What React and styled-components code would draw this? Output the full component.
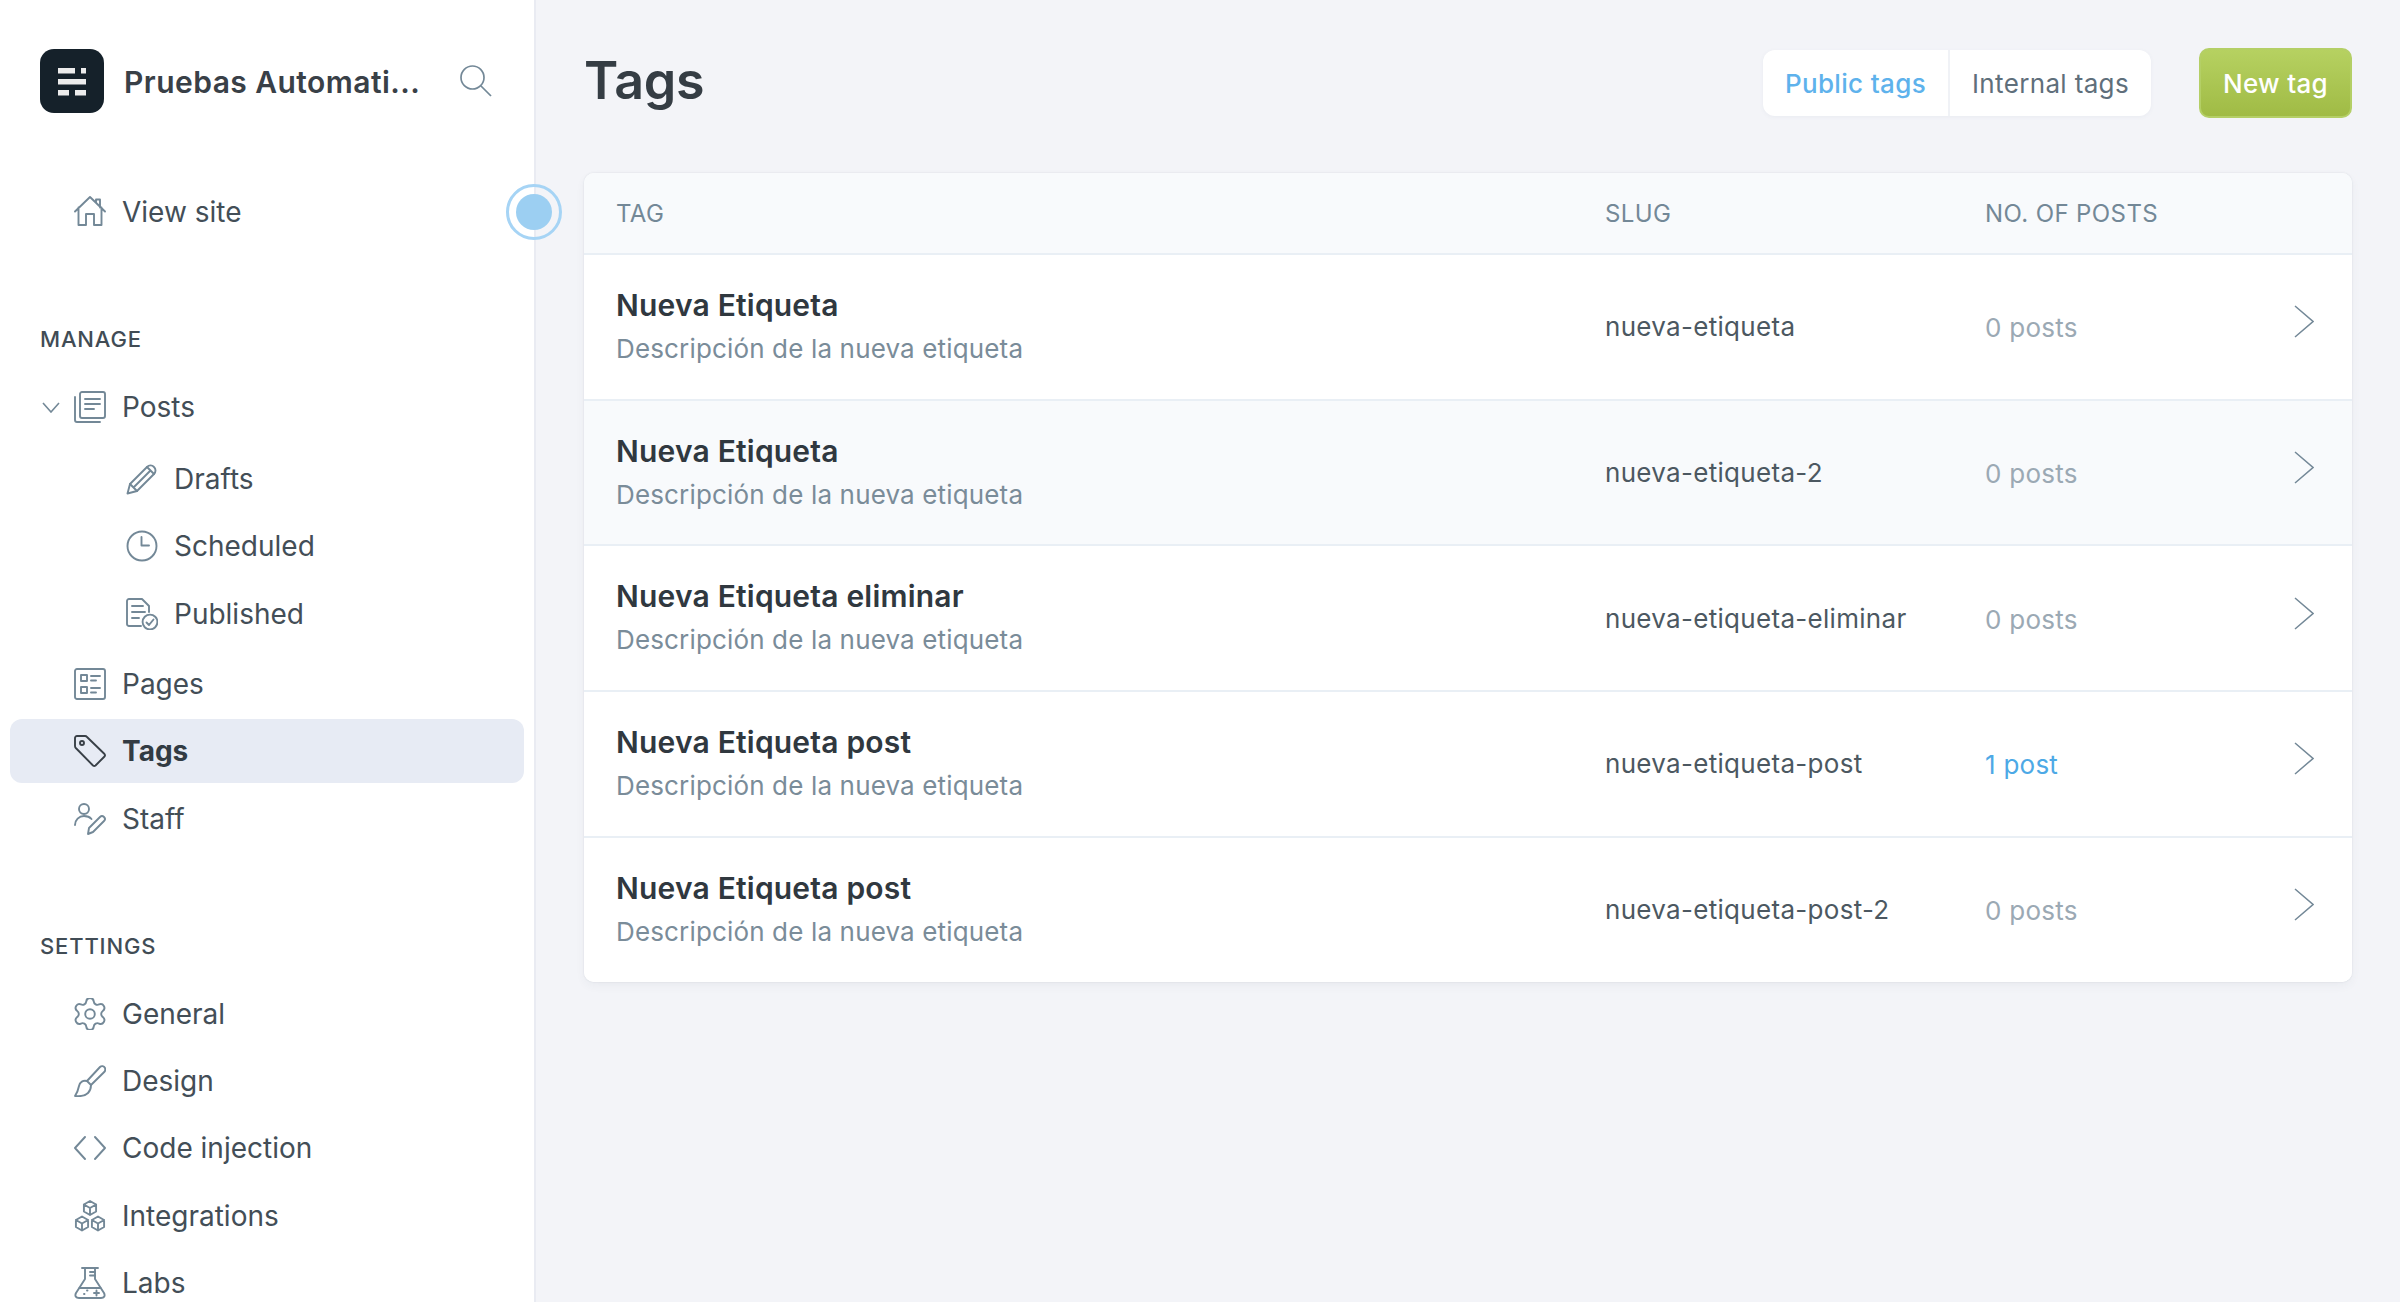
import styled, { createGlobalStyle } from "styled-components";
import { Settings } from "lucide-react";

const GlobalStyle = createGlobalStyle`
  html, body {
    margin: 0;
    height: 100%;
    background: #f3f4f8;
    font-family: Inter, "Liberation Sans", sans-serif;
    color: #394047;
    overflow: hidden;
  }
  * { box-sizing: border-box; }
`;

const Shell = styled.div`
  display: flex;
  height: 1302px;
  overflow: hidden;
`;

const Sidebar = styled.aside`
  position: relative;
  flex: 0 0 536px;
  padding-top: 49px;
  background: #fff;
  border-right: 2px solid #e9ebf2;
`;

const Brand = styled.div`
  display: flex;
  align-items: center;
  height: 64px;
  padding: 0 42px 0 40px;
  margin-bottom: 67px;
`;

const Logo = styled.div`
  flex: 0 0 64px;
  height: 64px;
  border-radius: 14px;
  background: #15212a;
`;

const SiteName = styled.div`
  flex: 1;
  margin: 2px 0 0 20px;
  font-size: 30px;
  font-weight: 600;
  white-space: nowrap;
  letter-spacing: 0.45px;
`;

const NavRow = styled.a`
  display: flex;
  align-items: center;
  height: 64px;
  margin: 0 10px 3.4px;
  padding-left: ${({ $sub }) => ($sub ? "116px" : "64px")};
  border-radius: 12px;
  font-size: 28px;
  font-weight: ${({ $active }) => ($active ? 700 : 400)};
  background: ${({ $active }) => ($active ? "#e7ebf4" : "transparent")};
  color: ${({ $active }) => ($active ? "#323b43" : "#434e57")};

  svg.nav-icon {
    flex: 0 0 32px;
    margin-right: 16px;
    color: ${({ $active }) => ($active ? "#394047" : "#738897")};
  }
`;

const Caret = styled.svg`
  flex: 0 0 18px;
  margin-left: -32px;
  margin-right: 14px;
`;

const SectionLabel = styled.div`
  height: 30px;
  line-height: 30px;
  margin: ${({ $top }) => $top}px 0 ${({ $bottom }) => $bottom}px 40px;
  font-size: 22px;
  font-weight: 500;
  letter-spacing: 0.85px;
  color: #414c55;
`;

const SubList = styled.div`
  padding: 4.6px 0 2.6px;
`;

const Pulse = styled.div`
  position: absolute;
  top: 184px;
  right: -28px;
  width: 56px;
  height: 56px;
  border-radius: 50%;
  border: 3px solid #a6d4f5;
  display: flex;
  align-items: center;
  justify-content: center;

  &::after {
    content: "";
    width: 36px;
    height: 36px;
    border-radius: 50%;
    background: #9ccff2;
  }
`;

const Main = styled.main`
  flex: 1;
  padding: 48px 48px 0;
`;

const Header = styled.header`
  display: flex;
  align-items: center;
  height: 70px;
  margin-bottom: 55px;
`;

const Title = styled.h1`
  flex: 1;
  margin: 0 0 6px;
  font-size: 52px;
  font-weight: 600;
  color: #353d44;
  letter-spacing: -0.3px;
`;

const TabGroup = styled.div`
  display: flex;
  height: 66px;
  margin-right: 48px;
  background: #fff;
  border-radius: 12px;
  box-shadow: 0 1px 4px rgba(90, 110, 130, 0.06);
`;

const Tab = styled.button`
  height: 100%;
  padding: 0 22px;
  border: 0;
  background: transparent;
  font: ${({ $active }) => ($active ? 500 : 400)} 26px Inter, sans-serif;
  letter-spacing: 0.35px;
  color: ${({ $active }) => ($active ? "#5eb2ec" : "#5f6f7b")};

  & + & {
    border-left: 2px solid #f0f2f6;
  }
`;

const NewButton = styled.button`
  width: 153px;
  height: 70px;
  border: 2px solid #b4cf66;
  border-radius: 10px;
  background: linear-gradient(#b6d161, #a0bb45);
  color: #fff;
  font: 500 26px Inter, sans-serif;
  letter-spacing: 0.3px;
`;

const Card = styled.section`
  background: #fff;
  border-radius: 10px;
  overflow: hidden;
  box-shadow: 0 0 2px rgba(60, 80, 100, 0.14), 0 4px 10px rgba(60, 80, 100, 0.05);
`;

const columns = "989px 380px 1fr";

const HeadRow = styled.div`
  display: grid;
  grid-template-columns: ${columns};
  align-items: center;
  height: 82px;
  padding-left: 32px;
  background: #f8fafc;
  border-bottom: 2px solid #e9eff5;
  font-size: 24px;
  letter-spacing: 0.4px;
  color: #738897;
`;

const Row = styled.div`
  display: grid;
  grid-template-columns: ${columns};
  align-items: center;
  height: 145.7px;
  padding-left: 32px;
  background: ${({ $tint }) => ($tint ? "#f8fafc" : "#fff")};
  border-bottom: 2px solid #e9eff5;

  &:last-child {
    border-bottom: 0;
    height: 144px;
  }
`;

const TagText = styled.div`
  padding-bottom: 1px;
`;

const TagName = styled.div`
  font-size: 30px;
  font-weight: 600;
  color: #30383f;
  letter-spacing: 0.2px;
  line-height: 40px;
  margin-bottom: 5px;
`;

const TagDesc = styled.div`
  font-size: 26px;
  color: #7a8c99;
  letter-spacing: 0.15px;
  line-height: 38px;
`;

const Slug = styled.div`
  font-size: 26px;
  color: #4c5861;
  letter-spacing: 0.3px;
`;

const PostCell = styled.div`
  display: flex;
  align-items: center;
  justify-content: space-between;
  padding-right: 38px;
`;

const Count = styled.span`
  margin-top: 2px;
  font-size: 26px;
  letter-spacing: 0.25px;
  color: ${({ $link }) => ($link ? "#4da9e6" : "#9ba9b4")};
`;

const RowArrow = styled.svg`
  margin-bottom: 10px;
`;

const Icon = ({ children }) => (
  <svg className="nav-icon" width="32" height="32" viewBox="0 0 32 32" fill="none" stroke="currentColor" strokeWidth="1.9" strokeLinecap="round" strokeLinejoin="round">
    {children}
  </svg>
);

const cube = (cx, cy, r) => {
  const w = r * 0.87;
  const h = r * 0.5;
  return `M${cx} ${cy - r}L${cx + w} ${cy - h}V${cy + h}L${cx} ${cy + r}L${cx - w} ${cy + h}V${cy - h}ZM${cx - w} ${cy - h}L${cx} ${cy}L${cx + w} ${cy - h}M${cx} ${cy}V${cy + r}`;
};

const HomeIcon = () => (
  <Icon>
    <path d="M1 15.5L16 1l15 14.5M22 6.5V3.5h4v8M4.5 11.5V29h7.5V18h8v11h7.5V11.5" />
  </Icon>
);
const PostsIcon = () => (
  <Icon>
    <rect x="6" y="1" width="25" height="26" rx="2" />
    <path d="M1 6v23a2 2 0 0 0 2 2h23M11 8h15M11 13h15M11 18h9" />
  </Icon>
);
const DraftsIcon = () => (
  <Icon>
    <path d="M1.5 30.5L4 21 21 4c2-2 5-2.200 7 0 2 2 2 5 0 7L11 28z" />
    <path d="M4 21l7 7M8 24L24 8M21 4l7 7" />
  </Icon>
);
const ClockIcon = () => (
  <Icon>
    <circle cx="16" cy="16" r="14.500" />
    <path d="M15.500 7v8.500H23" />
  </Icon>
);
const PublishedIcon = () => (
  <Icon>
    <path d="M15 28H3a2 2 0 0 1-2-2V3a2 2 0 0 1 2-2h13l7 7v6" />
    <path d="M6 8h11M6 14h13M6 20h7" />
    <circle cx="24" cy="24" r="7.400" />
    <path d="M20.500 24.500l2.500 2.500 4.500-5.500" />
  </Icon>
);
const PagesIcon = () => (
  <Icon>
    <rect x="1" y="1" width="30" height="30" rx="2" />
    <rect x="7" y="7" width="6" height="6" />
    <rect x="7" y="19" width="6" height="6" />
    <path d="M17 8h9M17 12.500h5M17 20h9M17 24.500h5" />
  </Icon>
);
const TagIcon = () => (
  <Icon>
    <path d="M3 1h8a2.500 2.500 0 0 1 2 1l17.500 17a2 2 0 0 1 0 2.500L21.500 30.500a2 2 0 0 1-2.500 0L1.800 13A3 3 0 0 1 1 11V3a2 2 0 0 1 2-2z" />
    <circle cx="8" cy="8" r="2" />
  </Icon>
);
const StaffIcon = () => (
  <Icon>
    <circle cx="10" cy="6" r="5" />
    <path d="M1 22c0-5 4-9 9-9 3 0 5.500 .7 7.500 3" />
    <path d="M14 31l1-6 11-11c1.500-1.500 3-1 4 0s1.500 2.500 0 4L19 29z" />
  </Icon>
);
const BrushIcon = () => (
  <Icon>
    <path d="M31 3c-1-2-3.500-2.500-5-1L13 16l4 4L30.200 7c1-1 1.300-2.500 .8-4z" />
    <path d="M13 16c-4-1-7 1-8 5-.8 4-2 7-4 10 5 .5 10 0 13-3 2.500-2.500 3-5.500 3-8" />
  </Icon>
);
const CodeIcon = () => (
  <Icon>
    <path d="M11 5L1 16l10 11M21 5l10 11-10 11" />
  </Icon>
);
const BoxesIcon = () => (
  <Icon>
    <path d={cube(16, 8, 7)} />
    <path d={cube(8, 23.5, 7)} />
    <path d={cube(24, 23.5, 7)} />
  </Icon>
);
const LabsIcon = () => (
  <Icon>
    <path d="M8 1h16M11 1v11L2 26c-1.500 3 0 5 3 5h22c3 0 4.500-2 3-5l-9-14V1" />
    <path d="M16 5h5M16 8.500h5M5.500 21h21M10 27h.5M13 23.500h.5M20 26h5M22.500 23.500v5" />
  </Icon>
);

const tags = [
  { name: "Nueva Etiqueta", slug: "nueva-etiqueta", count: "0 posts" },
  { name: "Nueva Etiqueta", slug: "nueva-etiqueta-2", count: "0 posts", tint: true },
  { name: "Nueva Etiqueta eliminar", slug: "nueva-etiqueta-eliminar", count: "0 posts" },
  { name: "Nueva Etiqueta post", slug: "nueva-etiqueta-post", count: "1 post", link: true },
  { name: "Nueva Etiqueta post", slug: "nueva-etiqueta-post-2", count: "0 posts" },
];

export default function App() {
  return (
    <Shell>
      <GlobalStyle />
      <Sidebar>
        <Brand>
          <Logo>
            <svg width="64" height="64" viewBox="0 0 64 64" fill="#ececec">
              <rect x="18" y="19" width="17" height="5.5" />
              <rect x="41" y="19" width="5" height="5.5" />
              <rect x="18" y="30" width="28" height="5.5" />
              <rect x="18" y="41" width="11" height="5.5" />
              <rect x="35" y="41" width="11" height="5.5" />
            </svg>
          </Logo>
          <SiteName>Pruebas Automati...</SiteName>
          <svg width="32" height="32" viewBox="0 0 32 32" fill="none" stroke="#738897" strokeWidth="1.7">
            <circle cx="12.5" cy="12.5" r="11.5" />
            <path d="M21 21l10 10" />
          </svg>
        </Brand>

        <NavRow><HomeIcon />View site</NavRow>

        <SectionLabel $top={80} $bottom={21}>MANAGE</SectionLabel>
        <NavRow>
          <Caret width="18" height="11" viewBox="0 0 18 11" fill="none" stroke="#738897" strokeWidth="1.6">
            <path d="M1 1l8 9 8-9" />
          </Caret>
          <PostsIcon />Posts
        </NavRow>
        <SubList>
          <NavRow $sub><DraftsIcon />Drafts</NavRow>
          <NavRow $sub><ClockIcon />Scheduled</NavRow>
          <NavRow $sub><PublishedIcon />Published</NavRow>
        </SubList>
        <NavRow><PagesIcon />Pages</NavRow>
        <NavRow $active><TagIcon />Tags</NavRow>
        <NavRow><StaffIcon />Staff</NavRow>

        <SectionLabel $top={80} $bottom={21}>SETTINGS</SectionLabel>
        <NavRow>
          <Settings className="nav-icon" size={32} viewBox="2 2 20 20" strokeWidth={1.2} />General
        </NavRow>
        <NavRow><BrushIcon />Design</NavRow>
        <NavRow><CodeIcon />Code injection</NavRow>
        <NavRow><BoxesIcon />Integrations</NavRow>
        <NavRow><LabsIcon />Labs</NavRow>

        <Pulse />
      </Sidebar>

      <Main>
        <Header>
          <Title>Tags</Title>
          <TabGroup>
            <Tab $active>Public tags</Tab>
            <Tab>Internal tags</Tab>
          </TabGroup>
          <NewButton>New tag</NewButton>
        </Header>

        <Card>
          <HeadRow>
            <span>TAG</span>
            <span>SLUG</span>
            <span>NO. OF POSTS</span>
          </HeadRow>
          {tags.map((tag) => (
            <Row key={tag.slug} $tint={tag.tint}>
              <TagText>
                <TagName>{tag.name}</TagName>
                <TagDesc>Descripción de la nueva etiqueta</TagDesc>
              </TagText>
              <Slug>{tag.slug}</Slug>
              <PostCell>
                <Count $link={tag.link}>{tag.count}</Count>
                <RowArrow width="20" height="33" viewBox="0 0 20 33" fill="none" stroke="#738897" strokeWidth="1.5">
                  <path d="M1 1l18 15.500L1 32" />
                </RowArrow>
              </PostCell>
            </Row>
          ))}
        </Card>
      </Main>
    </Shell>
  );
}
